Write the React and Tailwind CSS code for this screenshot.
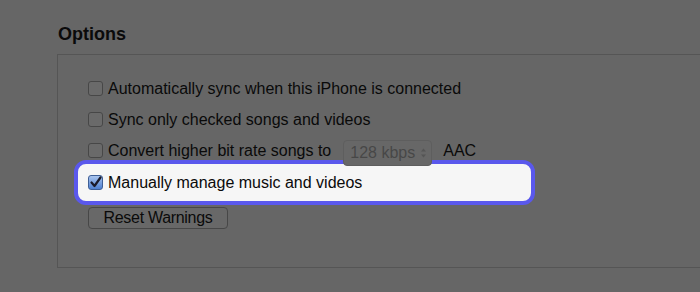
import React from "react"

function Checkbox({ checked }) {
    if (checked) {
        return (
            <div className="w-[15px] h-[15px] shrink-0 rounded-[3px] border border-[#3f5f96] bg-gradient-to-b from-[#a9c4ee] to-[#4f80d0] flex items-center justify-center">
                <svg width="13" height="13" viewBox="0 0 13 13">
                    <path d="M2.5 6.5 L5.5 10 L11.5 1.5" fill="none" stroke="#1a1a2a" strokeWidth="2.2" strokeLinecap="round" strokeLinejoin="round" />
                </svg>
            </div>
        )
    }
    return <div className="w-[15px] h-[15px] shrink-0 rounded-[3px] border border-[#474747] bg-[#6a6a6a]" />
}

function Row({ children, checked }) {
    return (
        <div className="h-[31px] flex items-center gap-[5px]">
            <Checkbox checked={checked} />
            {children}
        </div>
    )
}

export default function App() {
    return (
        <div className="w-[700px] h-[292px] overflow-hidden bg-[#666666] text-[#0a0a0a]" style={{ fontFamily: '"Liberation Sans", Arial, sans-serif' }}>
            <div className="pl-[58px] pt-[23px] text-[18px] font-bold leading-[22px]">Options</div>
            <div className="ml-[57px] mt-[9px] w-[700px] h-[214px] border-t border-l border-b border-[#555555] pl-[30px] pt-[18px] text-[16px]">
                <Row>
                    <span>Automatically sync when this iPhone is connected</span>
                </Row>
                <Row>
                    <span>Sync only checked songs and videos</span>
                </Row>
                <Row>
                    <span>Convert higher bit rate songs to</span>
                    <div className="ml-[7px] w-[89px] h-[26px] mt-[4px] rounded-[4px] border border-[#5e5e5e] bg-[#676767] flex items-center pl-[6px] text-[#474747]">
                        <span>128 kbps</span>
                        <svg className="ml-[5px]" width="7" height="12" viewBox="0 0 7 12">
                            <path d="M1 4.5 L3.5 1.5 L6 4.5 Z M1 7.5 L3.5 10.5 L6 7.5 Z" fill="#555555" />
                        </svg>
                    </div>
                    <span className="ml-[6px]">AAC</span>
                </Row>
                <div className="-ml-[14px] mt-[-6px] w-[461px] h-[45px] rounded-[12px] border-[4px] border-[#5a58ec] bg-[#f6f6f6] flex items-center gap-[5px] pl-[10px]">
                    <Checkbox checked />
                    <span>Manually manage music and videos</span>
                </div>
                <button className="mt-[2px] w-[140px] h-[22px] rounded-[4px] border border-[#474747] bg-[#686868] text-[16px] tracking-[-0.3px] leading-[20px] text-[#0a0a0a]">
                    Reset Warnings
                </button>
            </div>
        </div>
    )
}
